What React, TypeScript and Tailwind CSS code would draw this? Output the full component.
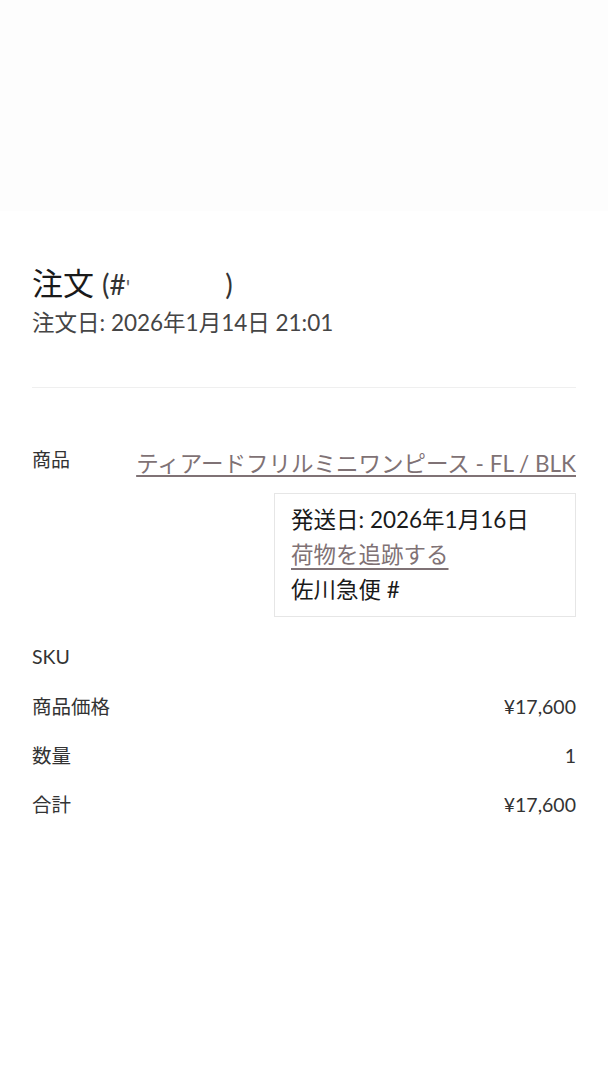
const font = { fontFamily: 'Lato, "Noto Sans CJK JP", sans-serif' };

const rows = [
  { label: 'SKU', value: '' },
  { label: '商品価格', value: '¥17,600' },
  { label: '数量', value: '1' },
  { label: '合計', value: '¥17,600' },
];

export default function App() {
  return (
    <div className="min-h-[1080px] w-[608px] bg-white" style={font}>
      <div className="h-[211px] bg-[#fdfdfd]" />

      <div className="px-8">
        <h1 className="mt-[52px] text-[31px] leading-[40px] text-[#1a1a1a]">
          注文 <span className="text-[28px] text-[#333]">(#</span>
          <span className="text-[22px] text-[#666]">'</span>
          <span className="inline-block w-[95px]" />
          <span className="text-[28px] text-[#333]">)</span>
        </h1>
        <p className="text-[22.5px] leading-[32px] text-[#454545]">注文日: 2026年1月14日 21:01</p>

        <div className="mt-[48px] h-px bg-[#efefef]" />

        <div className="mt-[57px] flex items-start justify-between">
          <span className="text-[19px] leading-[30px] text-[#333]">商品</span>
          <div className="flex flex-col items-end">
            <a className="mt-[4px] text-[22.5px] leading-[30px] text-[#7f7275] underline decoration-[1.5px] underline-offset-[3px]">
              ティアードフリルミニワンピース - FL / BLK
            </a>
            <div className="mt-[14px] w-[302px] border border-[#e6e6e6] px-4 pt-[8px] pb-[9px]">
              <p className="text-[22.5px] leading-[35px] text-[#1a1a1a]">発送日: 2026年1月16日</p>
              <a className="text-[22.5px] leading-[35px] text-[#7f7275] underline decoration-[1.5px] underline-offset-[5px]">
                荷物を追跡する
              </a>
              <p className="text-[22.5px] leading-[35px] text-[#1a1a1a]">佐川急便 #</p>
            </div>
          </div>
        </div>

        <div className="mt-[26px] flex flex-col gap-[21.3px]">
          {rows.map((r) => (
            <div key={r.label} className="flex h-[28px] items-center justify-between text-[19.5px] text-[#333]">
              <span>{r.label}</span>
              <span>{r.value}</span>
            </div>
          ))}
        </div>
      </div>
    </div>
  );
}
